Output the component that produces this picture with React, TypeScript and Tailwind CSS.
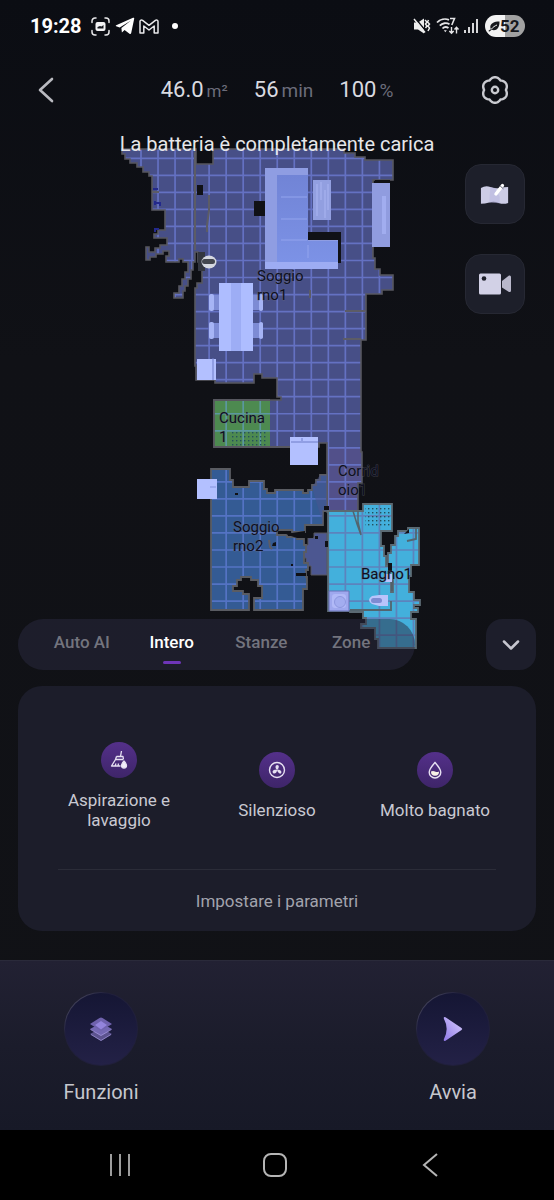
import { useState } from "react";
import type { FC, ReactNode } from "react";
import { ChevronDown } from "lucide-react";

type Stat = { value: string; unit: string; small?: boolean };

const stats: Stat[] = [
  { value: "46.0", unit: "m²", small: true },
  { value: "56", unit: "min" },
  { value: "100", unit: "%" },
];

const tabs = ["Auto AI", "Intero", "Stanze", "Zone"];

/* ---------- status bar ---------- */

const StatusBar: FC = () => (
  <div className="flex h-[52px] items-center justify-between pl-[30px] pr-[29px] text-white">
    <div className="flex items-center">
      <span className="text-[20px] leading-6 font-bold">19:28</span>
      <svg className="ml-[9px]" width="19" height="19" viewBox="0 0 19 19" fill="none" stroke="#e8e8ea" strokeWidth="1.5" strokeLinecap="round">
        <path d="M1 5.5V4a3 3 0 0 1 3-3h1M14 1h1a3 3 0 0 1 3 3v1.5M18 13.5V15a3 3 0 0 1-3 3h-1M5 18H4a3 3 0 0 1-3-3v-1.5" />
        <rect x="4.5" y="5" width="10" height="9" rx="2" fill="#f2f2f4" stroke="none" />
        <path d="M6.5 11.5V10L9 9l1.500 .5 2-1.500v3.500z" fill="#15171d" stroke="none" />
      </svg>
      <svg className="ml-[5px]" width="20" height="18" viewBox="0 0 20 18" fill="#fff">
        <path d="M1.200 8.300L18 .8c.8-.3 1.400.1 1.200 1l-3 14.200c-.2.900-.9 1.200-1.700.7L9.600 13l-2.700 2.600-.5-4.700L16 3.500 4.700 10.400 1.200 9.300c-.6-.2-.6-.7 0-1z" />
      </svg>
      <svg className="ml-1" width="20" height="15" viewBox="0 0 20 15" fill="none" stroke="#e9e9eb" strokeWidth="1.5" strokeLinejoin="round">
        <path d="M1 14V2.5C1 1 2.5 .6 3.6 1.4L10 6.3l6.400-4.900C17.500 .6 19 1 19 2.500V14h-3.800V7L10 11 4.800 7v7z" />
      </svg>
      <span className="ml-[13px] size-[6px] rounded-full bg-white" />
    </div>
    <div className="flex items-center">
      <svg width="18" height="16" viewBox="0 0 18 16" fill="#eee">
        <path d="M1 4.500h4L11 .5v15L5 11.500H1z" />
        <path d="M2.500 .5l11 13.500" stroke="#0d0f15" strokeWidth="1.500" />
        <path d="M1 1l11 13.500M12 2l2 2-1.500 2 1.500 2-1.500 2M15.500 2l-1 2 2 2-1.500 2 1.500 2-1.500 3" fill="none" stroke="#eee" strokeWidth="1.500" />
      </svg>
      <svg className="ml-[5px]" width="24" height="18" viewBox="0 0 24 18" fill="none" stroke="#e4e4e6" strokeWidth="1.8">
        <path d="M1 5.500C4 2.300 9 1.200 13 2.800M3.800 8.600C6.300 6 10.500 5.400 13.500 7.200M6.500 11.500c1.500-1.600 4-1.900 6-.5" />
        <path d="M14 1.500h4.500L15.800 8" strokeWidth="1.6" />
        <path d="M7.800 13.200h3l-1.500 2z" fill="#e4e4e6" stroke="none" />
        <path d="M15.500 10v6M13.300 14l2.200 2.300 2.200-2.300M20.500 16.500v-6M18.500 12.500l2-2.300 2 2.300" strokeWidth="1.4" />
      </svg>
      <svg className="ml-1" width="16" height="16" viewBox="0 0 16 16" fill="#d6d6d8">
        <rect x="0" y="12" width="2" height="3" />
        <rect x="4" y="9" width="2" height="6" />
        <rect x="8" y="5" width="2" height="10" />
        <rect x="12" y="1" width="2" height="14" />
      </svg>
      <div className="ml-[5px] flex h-[22px] w-[40px] items-center rounded-full bg-linear-to-r from-[#f3f3f3] from-50% to-[#a2a2a2] to-50% pl-[3px] text-[#16181c]">
        <svg width="12" height="11" viewBox="0 0 12 11" fill="#16181c">
          <path d="M11.500 .5C6 .5 2.300 2.500 2.300 6c0 .8 .2 1.400 .5 1.900L.3 10l1.200 .6 2.200-1.800c4.300 1.500 8-1.300 7.800-8.300z" />
          <path d="M3 8.500C5 6 7 4.800 9 4" stroke="#f3f3f3" fill="none" />
        </svg>
        <span className="text-[17px] leading-5 font-bold">52</span>
      </div>
    </div>
  </div>
);

/* ---------- header ---------- */

// six-lobed rosette used for the settings icon
const rosette =
  "M" +
  Array.from({ length: 72 }, (_, i) => {
    const t = (i * 5 * Math.PI) / 180;
    const r = 10.9 + 1.9 * Math.abs(Math.cos(3 * t));
    return `${(14 + r * Math.sin(t)).toFixed(2)} ${(14 - r * Math.cos(t)).toFixed(2)}`;
  }).join("L") +
  "Z";

const Header: FC = () => (
  <header className="grid h-[78px] grid-cols-[1fr_auto_1fr] items-center px-9 pb-[2px]">
    <button aria-label="Indietro" className="cursor-pointer justify-self-start">
      <svg width="20" height="28" viewBox="0 0 20 28" fill="none" stroke="#b9bac0" strokeWidth="2.6" strokeLinecap="round" strokeLinejoin="round">
        <path d="M16 3L4 14l12 11" />
      </svg>
    </button>
    <div className="flex items-baseline gap-[26px]">
      {stats.map((s) => (
        <p key={s.unit} className="flex items-baseline gap-[3px] text-[22px] leading-7 text-[#d9dae0]">
          {s.value}
          <span className={s.small ? "text-[17px] text-[#6b6c7a]" : "text-[19px] text-[#6b6c7a]"}>{s.unit}</span>
        </p>
      ))}
    </div>
    <button aria-label="Impostazioni" className="mr-[9px] cursor-pointer justify-self-end">
      <svg width="28" height="28" viewBox="0 0 28 28" fill="none" stroke="#c9cad0" strokeWidth="2.4" strokeLinejoin="round">
        <path d={rosette} />
        <circle cx="14" cy="14" r="3.2" />
      </svg>
    </button>
  </header>
);

/* ---------- map ---------- */

const xs = Array.from({ length: 18 }, (_, i) => 141 + i * 17.03);
const ys = Array.from({ length: 30 }, (_, i) => 158.3 + i * 17.03);

const living =
  "M122 149H196V164H213V149H344V153H355V157H365V160H393V180H373V258H375V269H380V275H393V290H382V294H366V340H361V452H362V483H358V512H327V443H319V447H214V400H281V397H277V378H262V374H254V383H215V380H196V366H195V288H197V283H202V262H198V252H195V262H193V270H191V279H188V286H185V291H183V298H174V293H179V286H182V279H185V272H188V262H183V259H179V262H166V256H169V251H163V254H156V257H150V260H146V247H149V252H155V248H160V245H167V238H154V234H158V230H165V210H152V176H149V172H143V167H137V163H130V159H125V154H122Z";

const lounge =
  "M211 469H230V480H233V487H249V481H264V489H267V493H275V490H303V493H308V490H312V485H316V480H320V475H327V511H323V525H305V532H292V530H277V535H287V537H297V539H304V545H306V552H304V563H308V570H306V577H307V589H303V610H254V598H262V586H258V580H251V577H241V580H237V586H233V591H243V594H249V610H211Z";

const bath =
  "M328 511H363V504H392V531H381V546H384V556H386V566H389V577H391V592H393V580H390V565H388V553H391V545H395V536H398V531H408V528H419V565H411V576H409V592H414V600H420V605H414V608H418V612H411V619H416V648H378V639H375V628H361V624H366V618H363V612H350V611H328Z";

const Grid: FC<{ clip: string; stroke: string }> = ({ clip, stroke }) => (
  <g clipPath={`url(#${clip})`} stroke={stroke} strokeWidth="1.7">
    {xs.map((x) => (
      <path key={`x${x}`} d={`M${x} 145V650`} />
    ))}
    {ys.map((y) => (
      <path key={`y${y}`} d={`M118 ${y}H424`} />
    ))}
  </g>
);

const RoomLabel: FC<{ x: number; y: number; lines: string[] }> = ({ x, y, lines }) => (
  <text x={x} y={y} fontSize="15" fill="#0d0f22" stroke="#6b6b78" strokeOpacity="0.5" strokeWidth="1" paintOrder="stroke">
    {lines.map((l, i) => (
      <tspan key={l} x={x} dy={i ? 19 : 0}>
        {l}
      </tspan>
    ))}
  </text>
);

const FloorMap: FC = () => (
  <svg className="block h-auto w-full overflow-visible" viewBox="0 130 554 489" role="img" aria-label="Mappa della casa">
    <defs>
      <clipPath id="living"><path d={living} /></clipPath>
      <clipPath id="lounge"><path d={lounge} /></clipPath>
      <clipPath id="bath"><path d={bath} /></clipPath>
      <clipPath id="kitchen"><path d="M214 400H270V447H214Z" /></clipPath>
      <pattern id="dots" width="4" height="4" patternUnits="userSpaceOnUse">
        <rect width="1.4" height="1.4" fill="#24505c" />
      </pattern>
      <linearGradient id="seat" x1="0" y1="0" x2="0" y2="1">
        <stop offset="0" stopColor="#7184d6" />
        <stop offset="1" stopColor="#7c92e6" />
      </linearGradient>
    </defs>

    {/* rooms */}
    <path d={living} fill="#474f87" />
    <path d="M327 447H361V483H358V512H327Z" fill="#52508a" />
    <Grid clip="living" stroke="#6471c2" />
    <path d={living} fill="none" stroke="#57575f" strokeWidth="1.6" />
    <path d="M214 400H270V447H214Z" fill="#4d8a50" />
    <Grid clip="kitchen" stroke="#5b97a0" />
    <path d="M230 431H268V446H230Z" fill="url(#dots)" />
    <path d="M270 400H214V447H290" fill="none" stroke="#57575f" strokeWidth="1.8" />

    <path d="M308 538H314V533H327V575H311V566H306V558H304V545H308Z" fill="#4c5791" stroke="#57575f" />
    <path d={lounge} fill="#345b94" />
    <Grid clip="lounge" stroke="#5473c4" />
    <path d={lounge} fill="none" stroke="#5a5c62" strokeWidth="1.8" />
    <path d="M312 487L320 475H327V511H323V525" fill="#4a5690" opacity="0.5" />

    <path d={bath} fill="#43b0dc" />
    <Grid clip="bath" stroke="#5c83bd" />
    <path d="M365 507H390V526H365Z" fill="url(#dots)" />
    <path d={bath} fill="none" stroke="#5b6a73" strokeWidth="1.8" />
    <path d="M353 511L357 524L361 535L358 522V511" fill="none" stroke="#53656f" strokeWidth="1.5" />
    <path d="M350 610H391V601M407 541L416 539V528" fill="none" stroke="#53656f" strokeWidth="1.8" />

    {/* walls and gaps */}
    <g fill="#101116">
      <path d="M197 185H203V195H197ZM254 201H267V216H254ZM308 232H341V263H308ZM375 180H390V184H375Z" />
      <path d="M281 531L292 533L305 531V534L313 530V538H297L288 535ZM324 506H329V510H324ZM325 541H328V547H325Z" />
      <path d="M235 493H238V495H235ZM273 543L276 542V546H272ZM315 536H318V539H315ZM291 564H293V566H291ZM296 573H306V576H296ZM409 529V533L404 534Z" />
      <path d="M388 563H392V571H388Z" />
    </g>
    <g fill="none" stroke="#5c5c66" strokeWidth="2">
      <path d="M209 195V211L207 225V232M345 311H365M343 339H361M195 152V250M310 290V298" />
      <path d="M152 192H159M269 540L270 547L272 549" />
    </g>
    <path d="M156 203H160V206M155 205V201M153 189H158M159 229H155V232" fill="none" stroke="#23298c" strokeWidth="2" />

    {/* sofa, coffee table, tv unit */}
    <path d="M265 168H308V240H338V269H265Z" fill="#8f9de2" />
    <path d="M277 175H308V241H338V262H277Z" fill="url(#seat)" />
    <path d="M265 262H338V269H265Z" fill="#9dacf3" />
    <path d="M281 197H307M281 219H307M281 240H307M308 245V258" stroke="#93a4ee" fill="none" />
    <path d="M313 180H331V220H313Z" fill="#929fe0" />
    <path d="M317 184V216M321 182V200M325 190V218M328 184V210" stroke="#aab5f2" />
    <path d="M372 183H390V247H372Z" fill="#909cdf" />
    <path d="M384 196V234" stroke="#a1adef" strokeWidth="4" />

    {/* dining table */}
    <g fill="#7d8bd4">
      <path d="M209 295H263V310H209ZM209 323H263V338H209Z" />
    </g>
    <g fill="#a6b4f5">
      <rect x="209" y="294" width="5" height="17" rx="2" />
      <rect x="209" y="322" width="5" height="17" rx="2" />
      <rect x="259" y="294" width="4" height="17" rx="2" />
      <rect x="259" y="322" width="4" height="17" rx="2" />
    </g>
    <path d="M219 283H253V351H219Z" fill="#aebdff" />
    <path d="M231 283H241V351H231Z" fill="#9dadf5" />

    {/* armchairs and cabinets */}
    <g fill="#b3c0ff">
      <path d="M197 359H216V380H197ZM197 479H217V499H197ZM290 437H318V465H290Z" />
    </g>
    <path d="M213 358V380M291 442H318M302 438V441" stroke="#6f7cc8" />
    <path d="M210 487H216" stroke="#8593dc" />

    {/* bathroom */}
    <path d="M329 591H349V611H329Z" fill="#9fa8ee" stroke="#6a73b8" />
    <rect x="332" y="594" width="14" height="14" rx="3" fill="#b1b9f7" />
    <circle cx="340" cy="602" r="5.5" fill="#a3adf0" stroke="#8e98e0" />
    <path d="M379 595H388V606H379L372 604Q366 600 372 596Z" fill="#b9c4fb" />
    <rect x="371" y="598" width="11" height="5" rx="2.5" fill="#7e8bd2" />
    <path d="M384 574H392V582H384Z" fill="#b9c4fb" />

    {/* docked robot */}
    <path d="M198 252H205V271H198Z" fill="#33363f" />
    <ellipse cx="209" cy="262" rx="7.5" ry="6.5" fill="#d5d8e0" />
    <rect x="202" y="259" width="13" height="5" rx="2.5" fill="#44474f" />

    <RoomLabel x={257} y={281} lines={["Soggio", "rno1"]} />
    <RoomLabel x={219} y={423} lines={["Cucina", "1"]} />
    <RoomLabel x={233} y={532} lines={["Soggio", "rno2"]} />
    <RoomLabel x={338} y={476} lines={["Corrid", "oio1"]} />
    <RoomLabel x={361} y={579} lines={["Bagno1"]} />
  </svg>
);

const MapButton: FC<{ label: string; children: ReactNode }> = ({ label, children }) => (
  <button
    aria-label={label}
    className="flex size-[60px] cursor-pointer items-center justify-center rounded-2xl border border-[#262833] bg-[#1d1f2a]"
  >
    {children}
  </button>
);

const MapSection: FC = () => (
  <section className="relative">
    <FloorMap />
    <p className="absolute inset-x-0 top-[2px] text-center text-[20px] leading-6 text-[#e6e7ea]">
      La batteria è completamente carica
    </p>
    <div className="absolute top-[34px] right-[29px] flex flex-col gap-[30px]">
      <MapButton label="Modifica mappa">
        <svg width="30" height="26" viewBox="0 0 32 26">
          <path d="M1 6.500Q6 3.500 11 5.500T21 6.500T30 5.500V22.500Q25 24.500 20 22.500T10 22T1 23.500Z" fill="#cdcde6" />
          <path d="M11 5.500L16 6.500L21 16V22.800L10 22Z" fill="#b9b8e0" opacity="0.6" />
          <path d="M17 13L24 4" stroke="#fff" strokeWidth="3.5" strokeLinecap="round" />
          <path d="M21.500 4.500L25 7.500" stroke="#55566a" />
        </svg>
      </MapButton>
      <MapButton label="Telecamera">
        <svg width="32" height="22" viewBox="0 0 32 22">
          <rect x="0" y="0.5" width="22" height="21" rx="1.5" fill="#d2d1e6" />
          <circle cx="5" cy="5.5" r="2.3" fill="#1d1f2a" />
          <path d="M23 8L30 2.500Q32 2 32 4V17.500Q32 19.500 30 19L23 14.500Z" fill="#b9b8cb" />
        </svg>
      </MapButton>
    </div>
  </section>
);

/* ---------- cleaning modes ---------- */

const ModeTabs: FC = () => {
  const [active, setActive] = useState("Intero");

  return (
    <div className="relative flex h-[51px] gap-[71px] px-[18px]">
      <div role="tablist" className="grid flex-1 grid-cols-4 rounded-[26px] bg-[#292a40]/50 px-[19px]">
        {tabs.map((t) => (
          <button
            key={t}
            role="tab"
            aria-selected={t === active}
            onClick={() => setActive(t)}
            className="flex cursor-pointer flex-col items-center gap-[9px] pt-[13px]"
          >
            <span
              className={
                t === active
                  ? "text-[17px] leading-5 font-medium text-white"
                  : "text-[17px] leading-5 font-medium text-[#73747e]"
              }
            >
              {t}
            </span>
            {t === active && <span className="h-[3px] w-[18px] rounded-full bg-[#6e35b8]" />}
          </button>
        ))}
      </div>
      <button aria-label="Comprimi" className="flex w-[50px] cursor-pointer items-center justify-center rounded-2xl bg-[#1d1e2b]">
        <ChevronDown size={28} strokeWidth={2.2} color="#c6c6cf" />
      </button>
    </div>
  );
};

const Option: FC<{ label: string; children: ReactNode }> = ({ label, children }) => (
  <button className="flex cursor-pointer flex-col items-center gap-3">
    <span className="flex size-9 items-center justify-center rounded-full bg-linear-to-b from-[#54308a] to-[#3e2569]">
      {children}
    </span>
    <span className="max-w-[124px] text-[17px] leading-5 text-[#c9c9d2]">{label}</span>
  </button>
);

const SettingsCard: FC = () => (
  <section className="mx-[18px] mt-4 rounded-[24px] bg-[#1c1d2a] px-[22px]">
    <div className="grid grid-cols-3 items-center pt-[56px] pb-[39px]">
      <Option label="Aspirazione e lavaggio">
        <svg width="18" height="18" viewBox="0 0 18 18" fill="none" stroke="#e6e0f2" strokeWidth="1.3" strokeLinejoin="round">
          <path d="M11.500 0L10.500 5.500M6.500 5.500h6.500l.5 3M6.500 5.500L5.500 8.500h7.500M5.500 8.500L1.500 15h9M5 15l1-2.500M8 15l.5-2.500" />
          <path d="M14 10c1.500 1.800 2.500 3 2.500 4.500a2.500 2.500 0 0 1-5 0C11.500 13 12.500 11.800 14 10z" fill="#f3effa" />
        </svg>
      </Option>
      <Option label="Silenzioso">
        <svg width="18" height="18" viewBox="0 0 18 18" fill="none" stroke="#e6e0f2" strokeWidth="1.4">
          <circle cx="9" cy="9" r="7.5" />
          <g fill="#e6e0f2" stroke="none">
            <path d="M9 9C7 7.500 7 4 9.200 4S11.300 7 9 9z" />
            <path d="M9 9c2.400-.8 5.200 1 4.200 2.900S9.800 11.800 9 9z" />
            <path d="M9 9c.4 2.500-2.600 4.500-4 2.900S5.800 8.300 9 9z" />
          </g>
        </svg>
      </Option>
      <Option label="Molto bagnato">
        <svg width="16" height="18" viewBox="0 0 16 18" fill="none" stroke="#e6e0f2" strokeWidth="1.4">
          <path d="M8 1.500C11 5 13.800 8 13.800 11.200a5.800 5.800 0 0 1-11.600 0C2.200 8 5 5 8 1.500z" />
          <path d="M4 10.500q2-1 4 0t4 0A4 4 0 0 1 4 11z" fill="#f6f1e6" stroke="none" />
        </svg>
      </Option>
    </div>
    <hr className="mx-[18px] border-[#2b2c38]" />
    <button className="block h-[61px] w-full cursor-pointer text-[17px] leading-5 text-[#a2a3ad]">
      Impostare i parametri
    </button>
  </section>
);

/* ---------- bottom ---------- */

const ActionButton: FC<{ label: string; children: ReactNode }> = ({ label, children }) => (
  <button className="flex w-[74px] cursor-pointer flex-col items-center gap-[14px]">
    <span className="flex size-[74px] items-center justify-center rounded-full bg-linear-to-br from-[#4a4960] from-10% to-[#201f3b] to-30% p-px">
      <span className="flex size-full items-center justify-center rounded-full bg-linear-to-b from-[#151634] to-[#232146]">
        {children}
      </span>
    </span>
    <span className="text-[20px] leading-6 text-[#c6c7ce]">{label}</span>
  </button>
);

const ActionBar: FC = () => (
  <div className="mt-[29px] flex justify-between border-t border-[#2a2a3a] bg-linear-to-b from-[#222133] via-[#1b1c2b] to-[#171927] px-[64px] pt-[31px] pb-[26px]">
    <ActionButton label="Funzioni">
      <svg width="24" height="26" viewBox="0 0 24 26">
        <path d="M1 18L12 12l11 6-9.500 6q-1.500 1-3 0z" fill="#5c538f" />
        <path d="M1 13L12 7l11 6-9.500 6q-1.500 1-3 0z" fill="#7468b3" />
        <path d="M1 8L10.500 2q1.500-1 3 0L23 8l-9.500 6q-1.500 1-3 0z" fill="#6f62ad" />
        <path d="M6 9l6-4 6 4-6 4.500z" fill="#9384dc" />
        <path d="M1.500 13.500L12 19.500l10.500-6M2 18.500L12 24.500l10-6" fill="none" stroke="#a79be0" strokeWidth="0.7" />
      </svg>
    </ActionButton>
    <ActionButton label="Avvia">
      <svg width="20" height="26" viewBox="0 0 20 26">
        <defs>
          <linearGradient id="play" x1="1" y1="0" x2="0" y2="1">
            <stop offset="0" stopColor="#d9cfff" />
            <stop offset="1" stopColor="#8f78e6" />
          </linearGradient>
        </defs>
        <path d="M.8 2.500Q.3 .3 2.500 1.200L18.500 12Q20 13 18.500 14L2.500 24.800Q.3 25.500 .8 23.500Q6.500 13 .8 2.500Z" fill="url(#play)" />
      </svg>
    </ActionButton>
  </div>
);

const NavBar: FC = () => (
  <nav className="grid h-[70px] grid-cols-3 place-items-center bg-black pr-[46px] pl-[42px]">
    <button aria-label="Recenti" className="cursor-pointer">
      <svg width="24" height="24" viewBox="0 0 24 24" stroke="#9c9c9c" strokeWidth="2">
        <path d="M3 1v22M12 1v22M21 1v22" />
      </svg>
    </button>
    <button aria-label="Home" className="cursor-pointer">
      <svg width="24" height="24" viewBox="0 0 24 24" fill="none" stroke="#b5b5b5" strokeWidth="2">
        <rect x="1" y="1" width="22" height="22" rx="7" />
      </svg>
    </button>
    <button aria-label="Indietro" className="cursor-pointer">
      <svg width="16" height="24" viewBox="0 0 16 24" fill="none" stroke="#b5b5b5" strokeWidth="2">
        <path d="M15 1L2 12l13 11" />
      </svg>
    </button>
  </nav>
);

export default function App() {
  return (
    <main className="flex min-h-screen flex-col bg-[#101116] bg-linear-to-b from-[#0b0d13] via-[#101116] via-30% to-[#111216] font-[Roboto,sans-serif]">
      <StatusBar />
      <Header />
      <MapSection />
      <ModeTabs />
      <SettingsCard />
      <ActionBar />
      <NavBar />
    </main>
  );
}
